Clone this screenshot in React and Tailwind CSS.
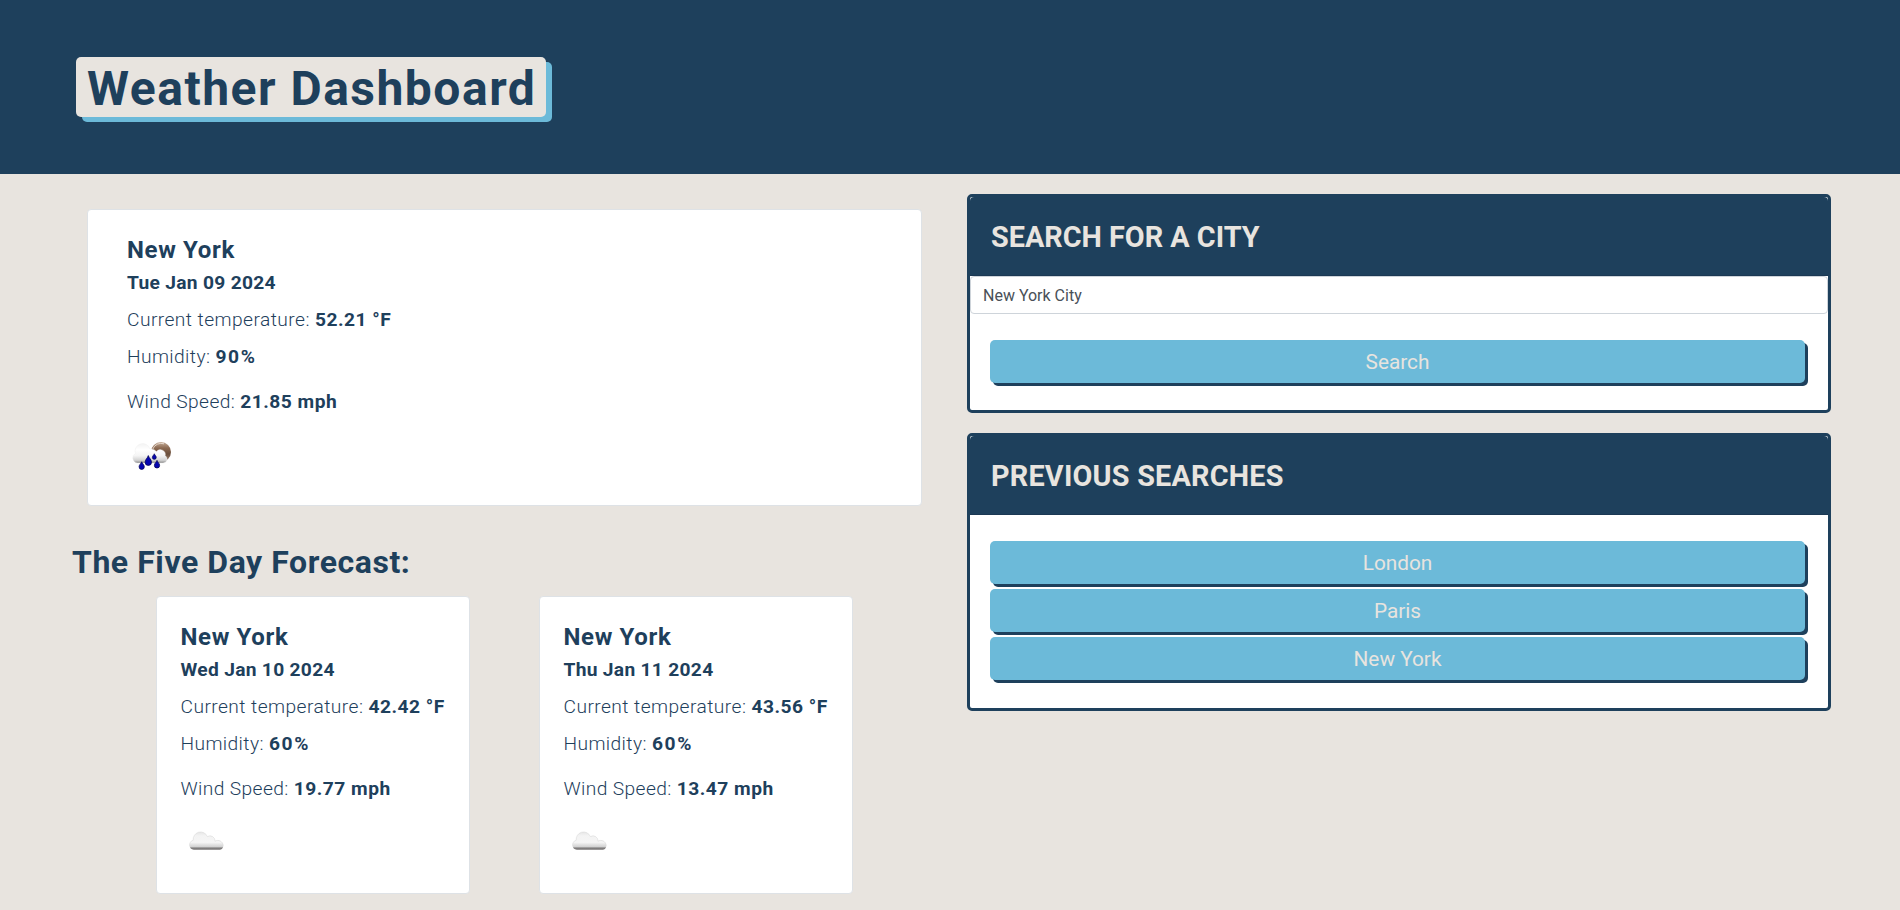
import React from "react";

function RainIcon() {
  return (
    <svg viewBox="0 0 50 50" className="block h-[50px] w-[50px]">
      <defs>
        <linearGradient id="moon" x1="0" y1="0" x2="0" y2="1">
          <stop offset="0" stopColor="#c4ab98" />
          <stop offset="0.3" stopColor="#8c6a52" />
          <stop offset="0.6" stopColor="#6b4f3c" />
          <stop offset="1" stopColor="#a78d7b" />
        </linearGradient>
        <linearGradient id="rainCloud" gradientUnits="userSpaceOnUse" x1="0" y1="14" x2="0" y2="32">
          <stop offset="0" stopColor="#f6f6f6" />
          <stop offset="0.25" stopColor="#ffffff" />
          <stop offset="0.6" stopColor="#f4f4f4" />
          <stop offset="0.85" stopColor="#d2d2d2" />
          <stop offset="1" stopColor="#8a8a8a" />
        </linearGradient>
      </defs>
      <circle cx="34" cy="21" r="10" fill="url(#moon)" />
      <path d="M25.8 18 A9 9 0 0 1 37 12.8" fill="none" stroke="#f3e9e0" strokeWidth="0.8" />
      <path
        d="M10 32 a5.2 5.2 0 0 1 -1.6 -9.6 a7.5 7.5 0 0 1 14.6 -4.4 a6.5 6.5 0 0 1 6.4 2.6 a5 5 0 0 1 8.8 4.2 a3.9 3.9 0 0 1 -2.2 7.2 z"
        fill="url(#rainCloud)"
        stroke="#ececec"
        strokeWidth="0.4"
      />
      <g fill="#0505b0" stroke="#05055a" strokeWidth="0.8">
        <path d="M21.3 24.6 c0.6 2.4 3.2 4 3.2 6.6 a3.2 3.2 0 0 1 -6.4 0 c0 -2.6 2.6 -4.2 3.2 -6.6z" />
        <path d="M14.7 30.8 c0.5 1.8 2.6 2.9 2.6 5 a2.6 2.6 0 0 1 -5.2 0 c0 -2.1 2.1 -3.2 2.6 -5z" />
        <path d="M30 29.4 c0.5 1.8 2.6 2.9 2.6 5 a2.6 2.6 0 0 1 -5.2 0 c0 -2.1 2.1 -3.2 2.6 -5z" />
        <path d="M27.3 22.8 c0.4 1.3 1.9 2.1 1.9 3.6 a1.9 1.9 0 0 1 -3.8 0 c0 -1.5 1.5 -2.3 1.9 -3.6z" />
      </g>
    </svg>
  );
}

function CloudIcon() {
  return (
    <svg viewBox="0 0 50 50" className="block h-[50px] w-[50px]">
      <defs>
        <linearGradient id="cloud" gradientUnits="userSpaceOnUse" x1="0" y1="13" x2="0" y2="32">
          <stop offset="0" stopColor="#e2e2e2" />
          <stop offset="0.25" stopColor="#f3f3f3" />
          <stop offset="0.6" stopColor="#f5f5f5" />
          <stop offset="0.85" stopColor="#cecece" />
          <stop offset="0.88" stopColor="#858383" />
          <stop offset="1" stopColor="#757373" />
        </linearGradient>
      </defs>
      <path
        d="M12.8 31.8 a4.9 4.9 0 0 1 -0.6 -9.6 a7.4 7.4 0 0 1 14.2 -3.6 a5 5 0 0 1 7.6 4.6 a5.4 5.4 0 0 1 8.4 4.4 a4.4 4.4 0 0 1 -3.4 4.2 z"
        fill="url(#cloud)"
      />
      <path
        d="M8.8 28.5 a5 5 0 0 1 3.4 -6.3 a7.4 7.4 0 0 1 14.2 -3.6 a5 5 0 0 1 7.6 4.6 a5.4 5.4 0 0 1 8.2 4.4"
        fill="none"
        stroke="#dadada"
        strokeWidth="0.6"
      />
    </svg>
  );
}

const today = {
  date: "Tue Jan 09 2024",
  temperature: "52.21 °F",
  humidity: "90%",
  wind: "21.85 mph",
};

const forecast = [
  { date: "Wed Jan 10 2024", temperature: "42.42 °F", humidity: "60%", wind: "19.77 mph" },
  { date: "Thu Jan 11 2024", temperature: "43.56 °F", humidity: "60%", wind: "13.47 mph" },
];

function Weather({ day, icon }) {
  return (
    <div className="whitespace-nowrap text-[19.2px] font-light leading-[29px]">
      <h3 className="text-2xl font-bold leading-[30px] tracking-[0.65px]">New York</h3>
      <p className="mt-1.5 font-bold leading-6 tracking-[0.3px]">{day.date}</p>
      <p className="mt-[10px] tracking-[0.44px]">
        Current temperature: <b className="font-bold tracking-[0.5px]">{day.temperature}</b>
      </p>
      <p className="mt-2 tracking-[0.4px]">
        Humidity: <b className="font-bold tracking-[1.6px]">{day.humidity}</b>
      </p>
      <p className="mt-4 tracking-[0.38px]">
        Wind Speed: <b className="font-bold tracking-[0.5px]">{day.wind}</b>
      </p>
      <div className="mt-[15px]">{icon}</div>
    </div>
  );
}

function Panel({ title, titleClass, children }) {
  return (
    <section className="rounded-[5px] border-[3px] border-[#1e405c] bg-white">
      <h2
        className={
          "h-[79px] rounded-t-[4px] border-b border-[#1b3853] bg-[#1e405c] pl-[21px] pt-[21px] text-[28.8px] font-bold leading-[39px] text-[#e8e4df] " +
          titleClass
        }
      >
        {title}
      </h2>
      {children}
    </section>
  );
}

function Button({ children }) {
  return (
    <button className="block h-[43px] w-full rounded-[5px] bg-[#6cbad9] pt-px text-center text-[20.8px] leading-[42px] text-[#e8e4df] shadow-[3px_3px_0_#1e405c]">
      {children}
    </button>
  );
}

export default function App() {
  return (
    <div className="h-[910px] overflow-hidden bg-[#e8e4df] font-['Roboto',sans-serif] text-[#1e405c]">
      <header className="h-[174px] bg-[#1e405c] pl-[76px] pt-[57px]">
        <h1 className="h-[60px] w-[470px] whitespace-nowrap rounded-[5px] bg-[#e8e4df] pl-[11px] pt-px text-5xl font-bold leading-[62px] tracking-[1.5px] shadow-[6px_5px_0_#6cbad9]">
          Weather Dashboard
        </h1>
      </header>
      <main className="flex">
        <div className="ml-[72px] w-[850px] pt-[35px]">
          <div className="ml-[15px] h-[297px] rounded-[4px] border border-[#dee2e6] bg-white pl-[39px] pt-[25px]">
            <Weather day={today} icon={<RainIcon />} />
          </div>
          <h2 className="mt-9 text-[32px] font-bold leading-10 tracking-[0.56px]">The Five Day Forecast:</h2>
          <div className="ml-[84px] mt-[14px] flex gap-[69px]">
            {forecast.map((day) => (
              <div
                key={day.date}
                className="h-[298px] w-[314px] shrink-0 rounded-[4px] border border-[#dee2e6] bg-white pl-[23.5px] pt-[25px]"
              >
                <Weather day={day} icon={<CloudIcon />} />
              </div>
            ))}
          </div>
        </div>
        <aside className="ml-[45px] flex w-[864px] flex-col gap-5 pt-5">
          <Panel title="SEARCH FOR A CITY" titleClass="tracking-[0px]">
            <input
              defaultValue="New York City"
              className="block h-[38px] w-full rounded-[4px] border border-[#ced4da] bg-white px-3 text-base text-[#495057]"
            />
            <div className="pb-[27px] pl-5 pr-[23px] pt-[26px]">
              <Button>Search</Button>
            </div>
          </Panel>
          <Panel title="PREVIOUS SEARCHES" titleClass="tracking-[0.22px]">
            <div className="flex flex-col gap-[5px] pb-7 pl-5 pr-[23px] pt-[26px]">
              <Button>London</Button>
              <Button>Paris</Button>
              <Button>New York</Button>
            </div>
          </Panel>
        </aside>
      </main>
    </div>
  );
}
